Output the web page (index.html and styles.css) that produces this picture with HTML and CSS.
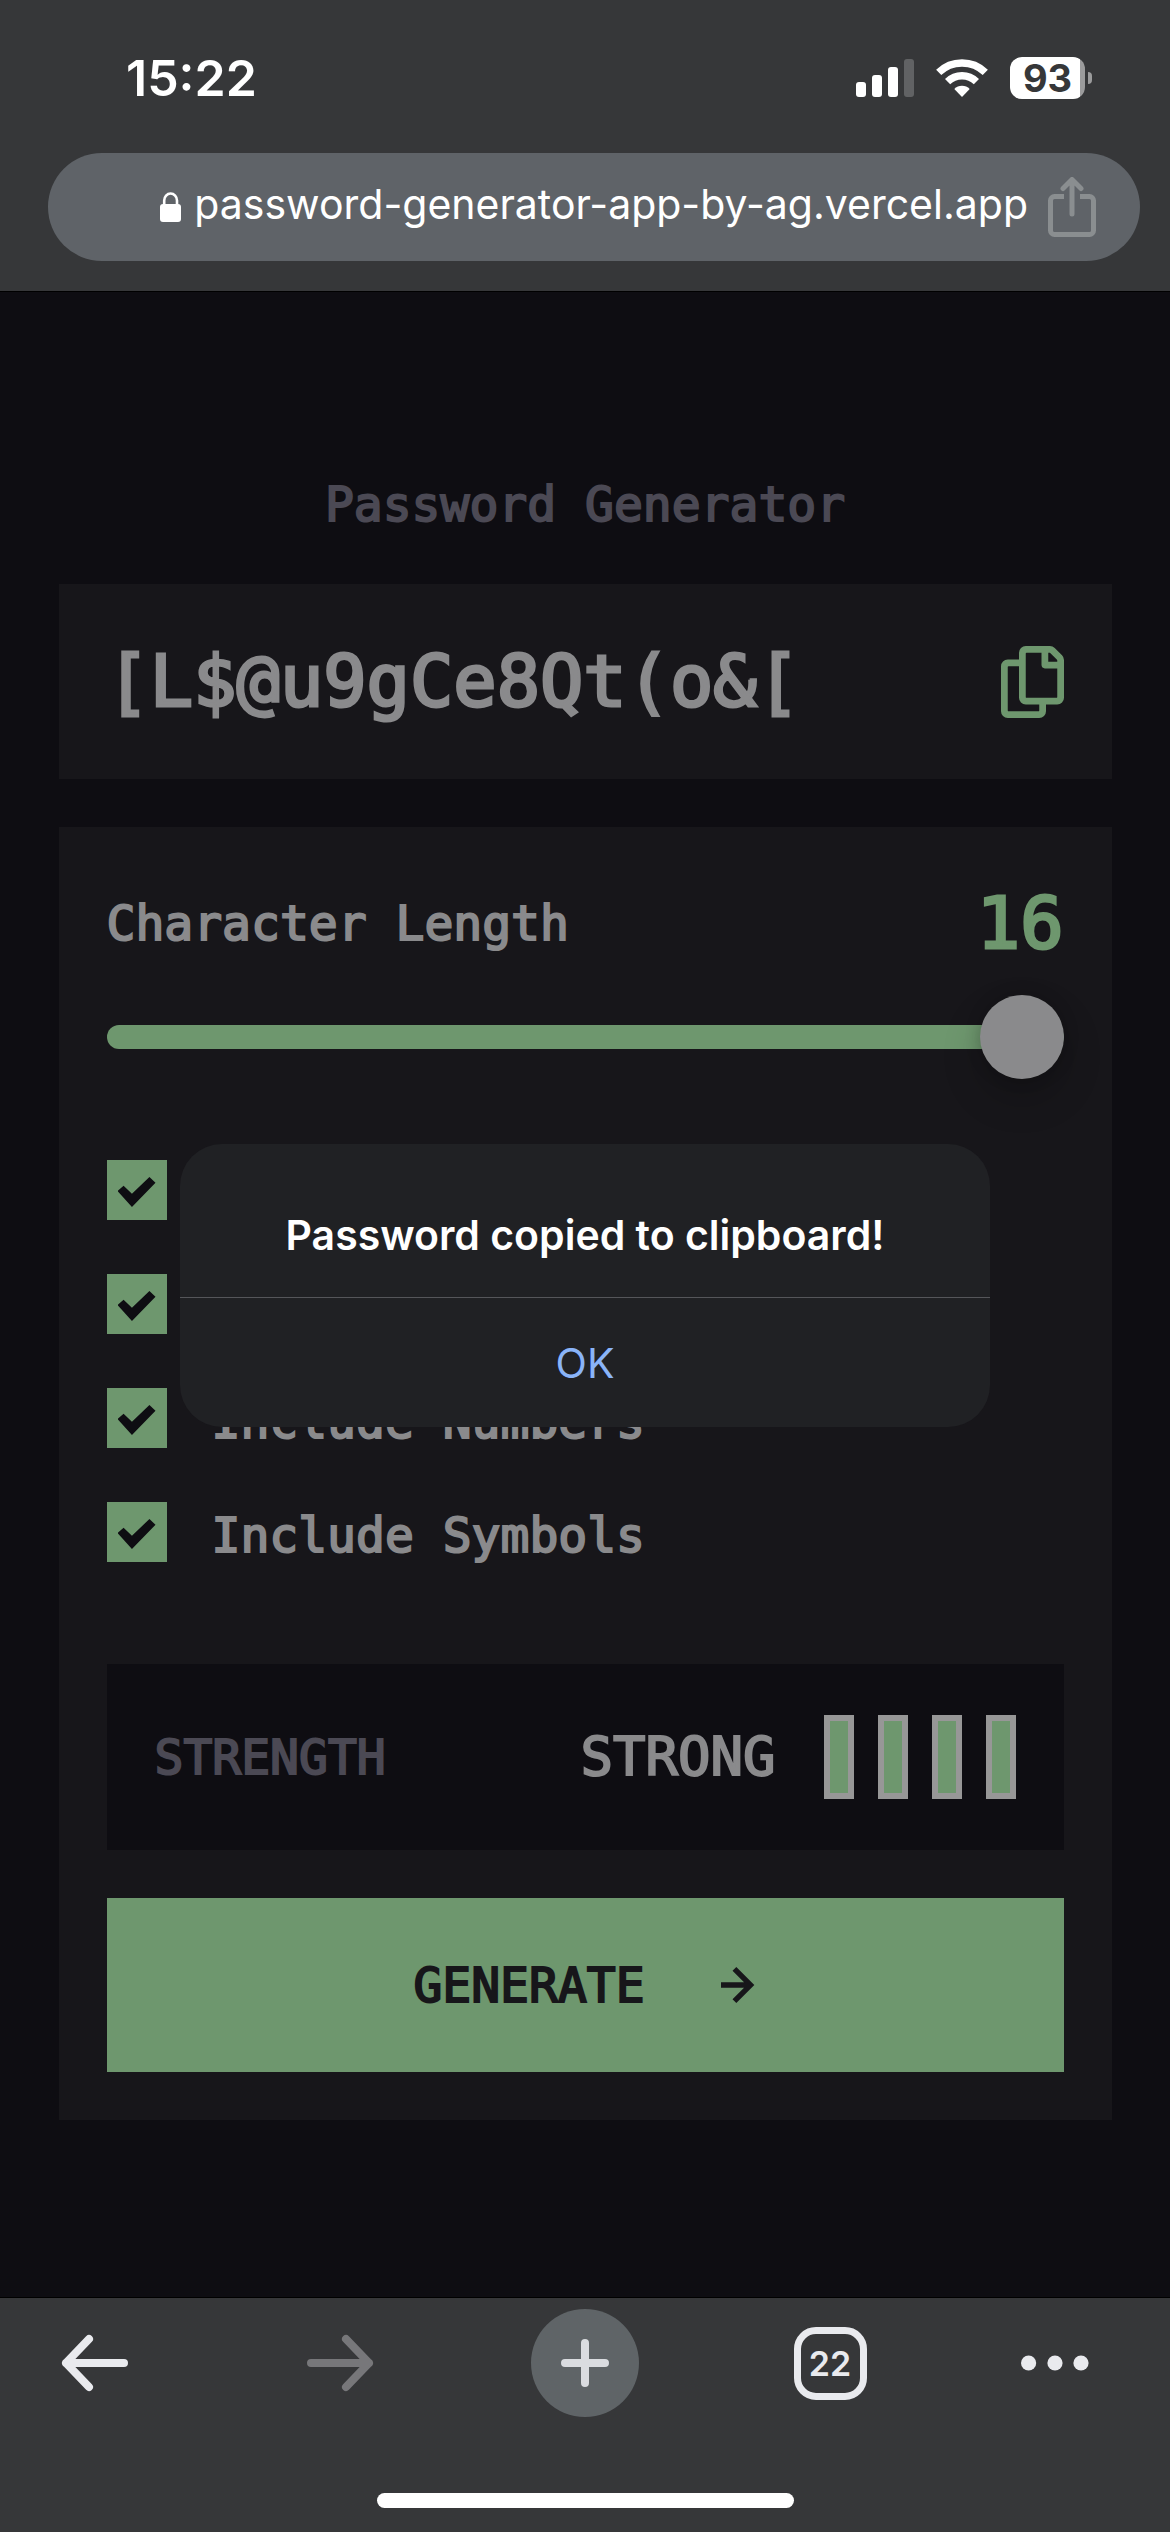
FILE: index.html
```html
<!DOCTYPE html>
<html lang="en">
<head>
<meta charset="utf-8">
<meta name="viewport" content="width=device-width, initial-scale=1">
<title>Password Generator</title>
<link rel="stylesheet" href="styles.css">
</head>
<body>
<header class="browser-top">
  <div class="status">
    <time class="clock">15:22</time>
    <div class="indicators">
      <svg width="58" height="38" viewBox="0 0 58 38" fill="#fff" aria-hidden="true">
        <rect x="0" y="23" width="10" height="15" rx="3"/><rect x="16" y="16" width="10" height="22" rx="3"/><rect x="32" y="8" width="10" height="30" rx="3"/><rect x="48" y="0" width="10" height="38" rx="3" fill="#616264"/>
      </svg>
      <svg width="52" height="38" viewBox="0 0 52 38" fill="none" stroke="#fff" stroke-width="7.4" aria-hidden="true">
        <path d="M2.7 13.4A33.5 33.5 0 0 1 49.3 13.4"/><path d="M11.6 22.6A20.5 20.5 0 0 1 40.4 22.6"/><path d="M26 38L18.3 30A10.6 10.6 0 0 1 33.7 30Z" fill="#fff" stroke="none"/>
      </svg>
      <div class="battery"><span class="battery-level">93</span><span class="battery-nub"></span></div>
    </div>
  </div>
  <div class="address">
    <a class="url" href="#">
      <svg width="22" height="30" viewBox="0 0 22 30" aria-hidden="true"><rect y="12" width="21" height="18" rx="3" fill="#fff"/><path d="M4.2 14V8.5a6.4 7 0 0 1 12.8 0V14" fill="none" stroke="#fff" stroke-width="2.6"/></svg>
      <span class="host">password-generator-app-by-ag.vercel.app</span>
    </a>
    <button class="icon-button" type="button" aria-label="Share">
      <svg width="48" height="60" viewBox="0 0 48 60" fill="none" stroke="#8a8e90" stroke-width="5" stroke-linecap="round" stroke-linejoin="round"><path d="M16 19.500H6.500a4 4 0 0 0-4 4v30a4 4 0 0 0 4 4h35a4 4 0 0 0 4-4v-30a4 4 0 0 0-4-4H32" stroke-linecap="butt"/><path d="M24 37V3M15 11.500l9-9 9 9"/></svg>
    </button>
  </div>
</header>

<main class="app">
  <h1 class="title">Password Generator</h1>
  <section class="card output">
    <output class="password">[L$@u9gCe8Qt(o&amp;[</output>
    <button class="icon-button" type="button" aria-label="Copy password">
      <svg width="63" height="72" viewBox="0 0 21 24" fill="#6e976e"><path d="M20.341 3.091 17.909.659A2.250 2.250 0 0 0 16.319 0H8.250A2.250 2.250 0 0 0 6 2.250V4.500H2.250A2.250 2.250 0 0 0 0 6.750v15A2.250 2.250 0 0 0 2.250 24h10.500A2.250 2.250 0 0 0 15 21.750V19.500h3.750A2.250 2.250 0 0 0 21 17.250V4.682a2.250 2.250 0 0 0-.659-1.591ZM12.469 21.750H2.530a.281.281 0 0 1-.281-.281V7.030a.281.281 0 0 1 .281-.281H6v10.500a2.250 2.250 0 0 0 2.250 2.250h4.500v1.969a.282.282 0 0 1-.281.281Zm6-4.500H8.530a.281.281 0 0 1-.281-.281V2.530a.281.281 0 0 1 .281-.281H13.500v4.125c0 .621.504 1.125 1.125 1.125h4.125v9.469a.282.282 0 0 1-.281.281Zm.281-12h-3v-3h.451c.075 0 .147.030.2.082L18.667 4.600a.283.283 0 0 1 .082.199v.451Z"/></svg>
    </button>
  </section>

  <form class="card settings">
    <div class="length">
      <label for="length">Character Length</label>
      <output class="length-value" for="length">16</output>
    </div>
    <input class="slider" id="length" type="range" min="4" max="16" value="16">
    <div class="options">
      <label class="option"><input type="checkbox" aria-label="Include Uppercase Letters" checked></label>
      <label class="option"><input type="checkbox" aria-label="Include Lowercase Letters" checked></label>
      <label class="option"><input type="checkbox" checked><span>Include Numbers</span></label>
      <label class="option"><input type="checkbox" checked><span>Include Symbols</span></label>
    </div>
    <div class="strength">
      <span class="strength-label">STRENGTH</span>
      <div class="rating">
        <span class="rating-text">STRONG</span>
        <div class="bars"><i></i><i></i><i></i><i></i></div>
      </div>
    </div>
    <button class="generate" type="button">
      <span>GENERATE</span>
      <svg width="36" height="36" viewBox="0 0 12 12" fill="#17161a" aria-hidden="true"><path d="m5.106 12 6-6-6-6-1.265 1.265 3.841 3.840H.001v1.790h7.681l-3.841 3.840z"/></svg>
    </button>
  </form>
</main>

<nav class="browser-bottom" aria-label="Browser">
  <div class="tools">
    <button class="tool" type="button" aria-label="Back">
      <svg width="68" height="64" viewBox="0 0 68 64" fill="none" stroke="#e9eaee" stroke-width="8" stroke-linecap="round" stroke-linejoin="round"><path d="M63 32H5M28 8L5 32l23 24"/></svg>
    </button>
    <button class="tool" type="button" aria-label="Forward" disabled>
      <svg width="68" height="64" viewBox="0 0 68 64" fill="none" stroke="#77777a" stroke-width="8" stroke-linecap="round" stroke-linejoin="round"><path d="M5 32h58M40 8l23 24-23 24"/></svg>
    </button>
    <button class="tool new-tab" type="button" aria-label="New tab">
      <svg width="48" height="48" viewBox="0 0 48 48" stroke="#dadce0" stroke-width="8" stroke-linecap="round"><path d="M24 4v40M4 24h40"/></svg>
    </button>
    <button class="tool" type="button" aria-label="Tabs"><span class="tab-count">22</span></button>
    <button class="tool menu" type="button" aria-label="Menu">
      <svg width="68" height="16" viewBox="0 0 68 16" fill="#e9eaee"><circle cx="7.600" cy="8" r="7.600"/><circle cx="34" cy="8" r="7.600"/><circle cx="60" cy="8" r="7.600"/></svg>
    </button>
  </div>
  <div class="home-indicator"></div>
</nav>

<div class="overlay">
  <div class="alert" role="alertdialog" aria-labelledby="alert-text">
    <p class="alert-text" id="alert-text">Password copied to clipboard!</p>
    <button class="alert-ok" type="button">OK</button>
  </div>
</div>
</body>
</html>
```
FILE: styles.css
```css
:root {
  --chrome: #363739;
  --pill: #5f6368;
  --page: #0e0d12;
  --card: #17161a;
  --green: #6e976e;
  --text: #8a8a8c;
  --muted: #4b4954;
  --ui: Inter, "Liberation Sans", sans-serif;
  --mono: "DejaVu Sans Mono", "Liberation Mono", monospace;
}

* { box-sizing: border-box; }

body {
  margin: 0;
  min-height: 100vh;
  display: flex;
  flex-direction: column;
  background: var(--page);
  color: var(--text);
  font-family: var(--mono);
  font-size: 48px;
}

button {
  margin: 0;
  padding: 0;
  border: 0;
  background: none;
  color: inherit;
  font: inherit;
}

svg { display: block; flex: none; }

/* Browser chrome, top */
.browser-top {
  background: var(--chrome);
  border-bottom: 1px solid #000;
  padding: 48px 30px 30px 48px;
  color: #fff;
  font-family: var(--ui);
}

.status {
  display: flex;
  justify-content: space-between;
  align-items: center;
  height: 60px;
  margin-bottom: 45px;
  padding: 0 48px 0 78px;
}

.clock { font-size: 50px; font-weight: 600; line-height: 60px; }

.indicators { display: flex; align-items: center; gap: 22px; }

.battery { display: flex; align-items: center; gap: 3px; }

.battery-level {
  width: 75px;
  border-radius: 12px;
  background: linear-gradient(to right, #fff 70px, #9b9b9c 70px);
  color: var(--chrome);
  font-size: 38px;
  font-weight: 700;
  line-height: 42px;
  text-align: center;
}

.battery-nub {
  width: 4px;
  height: 12px;
  border-radius: 0 4px 4px 0;
  background: #9b9b9c;
}

.address {
  display: flex;
  align-items: center;
  justify-content: flex-end;
  gap: 20px;
  height: 108px;
  padding: 0 44px;
  border-radius: 54px;
  background: var(--pill);
}

.url {
  display: flex;
  align-items: center;
  gap: 12px;
  color: #fff;
  font-size: 41px;
  text-decoration: none;
  white-space: nowrap;
}

.host { padding-bottom: 6px; }

/* Generator */
.app {
  flex: 1;
  display: flex;
  flex-direction: column;
  gap: 48px;
  padding: 180px 5% 48px;
}

.title,
.length label,
.option,
.strength,
.generate { -webkit-text-stroke: 2px currentColor; }

.password,
.length-value { -webkit-text-stroke: 3px currentColor; }

.title {
  margin: 0;
  color: var(--muted);
  font-size: 48px;
  font-weight: 400;
  line-height: 64px;
  text-align: center;
}

.card { background: var(--card); padding: 48px; }

.output {
  display: flex;
  align-items: center;
  justify-content: space-between;
}

.password { font-size: 72px; line-height: 99px; }

.settings { display: flex; flex-direction: column; }

.length {
  display: flex;
  align-items: center;
  justify-content: space-between;
  margin-bottom: 24px;
}

.length-value {
  color: var(--green);
  font-size: 72px;
  line-height: 96px;
}

.slider {
  appearance: none;
  width: 100%;
  height: 84px;
  margin: 0 0 81px;
  background: none;
}

.slider::-webkit-slider-runnable-track {
  height: 24px;
  border-radius: 12px;
  background: var(--green);
}

.slider::-webkit-slider-thumb {
  appearance: none;
  width: 84px;
  height: 84px;
  margin-top: -30px;
  border-radius: 50%;
  background: var(--text);
  box-shadow: 0 18px 40px rgba(0, 0, 0, .2), 0 0 16px rgba(0, 0, 0, .2);
}

.options {
  display: flex;
  flex-direction: column;
  gap: 48px;
  margin-bottom: 96px;
}

.option {
  display: flex;
  align-items: flex-start;
  gap: 45px;
  min-height: 66px;
  line-height: 66px;
}

.option input {
  appearance: none;
  display: grid;
  place-items: center;
  width: 60px;
  height: 60px;
  margin: 0;
  padding-top: 4px;
  background: var(--green);
}

.option input:checked::before {
  content: "";
  width: 38px;
  height: 30px;
  background: var(--page);
  clip-path: polygon(0 47%, 16% 29%, 38% 56%, 84% 0, 100% 19%, 38% 100%);
}

.strength {
  display: flex;
  align-items: center;
  justify-content: space-between;
  margin-bottom: 48px;
  padding: 51px 48px;
  background: var(--page);
}

.strength-label { color: var(--muted); }

.rating { display: flex; align-items: center; gap: 48px; }

.rating-text { font-size: 54px; line-height: 72px; }

.bars { display: flex; gap: 24px; }

.bars i {
  width: 30px;
  height: 84px;
  border: 6px solid #979797;
  background: var(--green);
}

.generate {
  display: flex;
  align-items: center;
  justify-content: center;
  gap: 76px;
  height: 174px;
  background: var(--green);
  color: var(--card);
}

/* Browser chrome, bottom */
.browser-bottom {
  background: var(--chrome);
  border-top: 1px solid #000;
  padding: 11px 41px 24px;
  font-family: var(--ui);
}

.tools { display: flex; justify-content: space-between; }

.tool {
  display: flex;
  align-items: center;
  justify-content: center;
  width: 108px;
  height: 108px;
}

.new-tab { border-radius: 50%; background: #5f6467; }

.menu { justify-content: flex-start; }

.tab-count {
  width: 73px;
  border: 7px solid #e9eaee;
  border-radius: 22px;
  color: #e9eaee;
  font-size: 34px;
  font-weight: 600;
  line-height: 59px;
}

.home-indicator {
  width: 417px;
  height: 15px;
  margin: 76px auto 0;
  border-radius: 8px;
  background: #fff;
}

/* Alert */
.overlay {
  position: fixed;
  inset: 0;
  display: flex;
  align-items: center;
  justify-content: center;
  padding: 39px 48px 0;
}

.alert {
  width: 100%;
  max-width: 810px;
  border-radius: 42px;
  background: #202124;
  font-family: var(--ui);
  font-size: 41px;
  line-height: 52px;
  text-align: center;
}

.alert-text {
  margin: 0;
  padding: 65px 48px 36px;
  border-bottom: 1px solid #55565a;
  color: #fff;
  font-weight: 600;
}

.alert-ok { width: 100%; height: 129px; color: #8ab4f8; }
```
